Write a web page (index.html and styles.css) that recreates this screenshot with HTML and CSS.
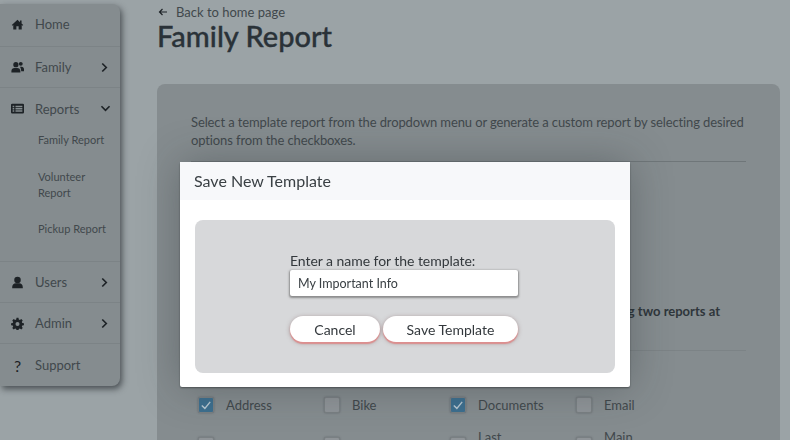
FILE: index.html
```html
<!DOCTYPE html>
<html lang="en">
<head>
<meta charset="utf-8">
<title>Family Report</title>
<link rel="stylesheet" href="styles.css">
</head>
<body>
<div class="page">
  <nav class="sidebar">
    <a class="nav-row nav-row-first"><svg class="nav-icon" viewBox="0 0 16 16"><path d="M8 2.200 1 8.600l.8.9 1-.9V14h3.800v-3.800h2.800V14h3.800V8.600l1 .9.8-.9-2-1.800V3h-2v2.100z"/></svg><span class="nav-label">Home</span></a>
    <a class="nav-row"><svg class="nav-icon" viewBox="0 0 16 16"><circle cx="6" cy="4.500" r="3.200"/><path d="M0.500 14v-1.800C.5 10 2.200 8.500 4.400 8.500h3.200c2.200 0 3.900 1.500 3.900 3.700V14z"/><circle cx="12" cy="3.500" r="2.400"/><path d="M11 7h2c1.800 0 3 1.300 3 3.200V12.500h-3.500c0-2.200-.5-4-1.500-5.500z"/></svg><span class="nav-label">Family</span><svg class="chev" viewBox="0 0 10 12"><path d="M2.500 1.500 7 6l-4.500 4.500"/></svg></a>
    <div class="nav-group">
      <a class="nav-row nav-row-open"><svg class="nav-icon" viewBox="0 0 16 16"><path fill-rule="evenodd" d="M1.500 2h13A1.500 1.500 0 0 1 16 3.500v9a1.500 1.500 0 0 1-1.500 1.500h-13A1.500 1.500 0 0 1 0 12.500v-9A1.500 1.500 0 0 1 1.500 2zM2 4.500v2h2v-2zm3.500 0v2H14v-2zM2 7.500v1.800h2V7.500zm3.500 0v1.800H14V7.500zM2 10.200v1.800h2v-1.800zm3.500 0v1.800H14v-1.800z"/></svg><span class="nav-label">Reports</span><svg class="chev chev-down" viewBox="0 0 12 10"><path d="M1.500 2.500 6 7l4.500-4.500"/></svg></a>
      <a class="nav-sub nav-sub-first">Family Report</a>
      <a class="nav-sub">Volunteer Report</a>
      <a class="nav-sub">Pickup Report</a>
    </div>
    <a class="nav-row"><svg class="nav-icon" viewBox="0 0 16 16"><circle cx="8" cy="5" r="4"/><path d="M1.500 15v-1.500C1.500 11 3.500 9 6 9h4c2.500 0 4.500 2 4.500 4.500V15z"/></svg><span class="nav-label">Users</span><svg class="chev" viewBox="0 0 10 12"><path d="M2.500 1.500 7 6l-4.500 4.500"/></svg></a>
    <a class="nav-row"><svg class="nav-icon" viewBox="0 0 16 16"><path fill-rule="evenodd" d="M6.800 1h2.400l.4 2 1.300.6 1.800-1.100 1.700 1.700-1.100 1.800.6 1.300 2 .4v2.400l-2 .4-.6 1.300 1.100 1.800-1.700 1.700-1.800-1.100-1.300.6-.4 2H6.800l-.4-2-1.300-.6-1.800 1.100-1.700-1.700 1.100-1.800-.6-1.300-2-.4V7.700l2-.4.6-1.300-1.100-1.800 1.700-1.700 1.800 1.100 1.300-.6zM8 6a2.500 2.500 0 1 0 0 5 2.500 2.500 0 0 0 0-5z"/></svg><span class="nav-label">Admin</span><svg class="chev" viewBox="0 0 10 12"><path d="M2.500 1.500 7 6l-4.500 4.500"/></svg></a>
    <a class="nav-row nav-row-last"><span class="nav-icon nav-q">?</span><span class="nav-label">Support</span></a>
  </nav>
  <main class="main">
    <a class="back"><svg class="back-arrow" viewBox="0 0 10 10"><path d="M9 5H1.500M4.500 2 1.500 5l3 3"/></svg>Back to home page</a>
    <h1 class="title">Family Report</h1>
    <section class="card">
      <p class="intro">Select a template report from the dropdown menu or generate a custom report by selecting desired options from the checkboxes.</p>
      <hr class="rule">
      <p class="warning">Please be careful when generating two reports at</p>
      <hr class="rule rule-faint">
      <div class="options">
        <label class="option"><span class="box box-on"><svg viewBox="0 0 10 10"><path d="M2 5.300 4.200 7.400 8 2.800"/></svg></span>Address</label>
        <label class="option"><span class="box"></span>Bike</label>
        <label class="option"><span class="box box-on"><svg viewBox="0 0 10 10"><path d="M2 5.300 4.200 7.400 8 2.800"/></svg></span>Documents</label>
        <label class="option"><span class="box"></span>Email</label>
        <label class="option"><span class="box"></span>First Name</label>
        <label class="option"><span class="box"></span>Gender</label>
        <label class="option"><span class="box"></span>Last<br>Name</label>
        <label class="option"><span class="box"></span>Main<br>Phone</label>
      </div>
    </section>
  </main>
</div>
<div class="backdrop">
  <div class="modal">
    <div class="modal-head">Save New Template</div>
    <div class="modal-body">
      <div class="panel">
        <div class="form">
          <label class="field-label" for="tpl">Enter a name for the template:</label>
          <input class="field" id="tpl" type="text" value="My Important Info">
          <div class="actions">
            <button class="btn btn-cancel">Cancel</button>
            <button class="btn btn-save">Save Template</button>
          </div>
        </div>
      </div>
    </div>
  </div>
</div>
</body>
</html>
```
FILE: styles.css
```css
* { box-sizing: border-box; }
html, body { margin: 0; height: 100%; }
body {
  width: 790px;
  height: 440px;
  overflow: hidden;
  background: #9ba3a6;
  font-family: "Lato", "Liberation Sans", sans-serif;
  color: #3a4146;
}
.page { display: flex; align-items: flex-start; height: 440px; overflow: hidden; }
.sidebar {
  width: 120px;
  flex: none;
  margin-top: 4px;
  background: #858c8f;
  border-radius: 0 8px 8px 0;
  box-shadow: 2px 3px 6px rgba(30, 36, 40, .65);
  display: flex;
  flex-direction: column;
}
.nav-row {
  height: 41px;
  display: flex;
  align-items: center;
  padding: 0 11px 0 11px;
  border-bottom: 1px solid #7c8386;
  font-size: 13px;
  color: #41484c;
}
.nav-row-first { height: 43px; padding-bottom: 2px; }
.nav-row-open { border-bottom: 0; height: 40px; padding-top: 1px; }
.nav-row-last { border-bottom: 0; height: 42px; }
.nav-group { border-bottom: 1px solid #7c8386; height: 174px; }
.nav-icon { width: 13px; height: 13px; fill: #1d2226; flex: none; }
.nav-q { font-size: 16px; color: #1d2226; line-height: 13px; text-align: center; }
.nav-label { margin-left: 11px; flex: 1; }
.chev { width: 9px; height: 11px; fill: none; stroke: #1d2226; stroke-width: 1.800; flex: none; }
.chev-down { width: 11px; height: 9px; margin-right: -2px; }
.nav-sub {
  display: block;
  padding: 0 8px 0 38px;
  margin-bottom: 20px;
  font-size: 11px;
  line-height: 16px;
  color: #41484c;
}
.nav-sub-first { margin-top: 4px; margin-bottom: 21px; }
.main { flex: 1; padding: 0 10px 0 37px; min-width: 0; }
.back { display: flex; align-items: center; height: 16px; margin-top: 4px; font-size: 13px; color: #41484c; }
.back-arrow { width: 10px; height: 10px; margin: 0 8px 0 1px; fill: none; stroke: #1d2226; stroke-width: 1.200; }
.title { margin: 1px 0 0; font-size: 29px; line-height: 30px; font-weight: 500; color: #2a3238; -webkit-text-stroke: .35px #2a3238; }
.card {
  margin-top: 33px;
  height: 400px;
  background: #858c8f;
  border-radius: 8px;
  padding: 29px 34px 0;
}
.intro { margin: 0; font-size: 13px; letter-spacing: -.12px; line-height: 18px; color: #41484c; }
.rule { margin: 12px 0 0; border: 0; border-top: 1px solid #6f7679; }
.rule-faint { margin-top: 30px; border-top-color: #7c8386; }
.warning {
  margin: 140px 0 0;
  height: 18px;
  font-size: 13px;
  line-height: 18px;
  font-weight: 700;
  color: #2f363b;
  text-align: right;
  padding-right: 26px;
  white-space: nowrap;
}
.options {
  display: grid;
  grid-template-columns: repeat(4, 126px);
  grid-auto-rows: 40px;
  margin: 37px 0 0 7px;
}
.option { display: flex; align-items: center; height: 34px; font-size: 13px; line-height: 16px; color: #41484c; }
.box {
  width: 16px;
  height: 16px;
  flex: none;
  margin-right: 12px;
  background: #8f9498;
  border: 1px solid #7a8083;
  border-radius: 2px;
  box-shadow: 0 0 2px rgba(60, 66, 70, .5);
}
.box svg { display: block; width: 14px; height: 14px; fill: none; stroke: #b8c8d2; stroke-width: 1; }
.box-on { background: #3d6f8f; }
.backdrop { position: fixed; inset: 0; padding: 162px 0 0 180px; }
.modal { width: 450px; height: 225px; background: #fff; border-radius: 2px; box-shadow: 0 0 40px rgba(40, 46, 50, .35), 0 1px 2px rgba(0, 0, 0, .4); }
.modal-head { height: 38px; padding-left: 14px; background: #f7f8fa; font-size: 16px; line-height: 38px; color: #3a4044; }
.modal-body { padding: 20px 15px 0; }
.panel { height: 153px; background: #d7d8da; border-radius: 8px; padding-top: 31px; }
.form { width: 228px; margin: 0 auto 0 95px; }
.field-label { display: block; font-size: 14px; letter-spacing: -.05px; line-height: 19px; color: #33383c; }
.field {
  display: block;
  width: 228px;
  height: 26px;
  padding: 0 8px;
  border: 0;
  border-radius: 2px;
  background: #fff;
  box-shadow: 0 1px 2px 1px rgba(90, 90, 90, .6);
  font: inherit;
  font-size: 12.500px;
  color: #3a4044;
}
.actions { display: flex; gap: 3px; margin-top: 20px; }
.btn {
  height: 26px;
  border: 0;
  border-radius: 13px;
  background: #fff;
  font: inherit;
  font-size: 14px;
  color: #33383c;
  box-shadow: 0 2px 1px #dc8f8f, 0 1px 4px rgba(110, 70, 70, .5);
  padding: 0;
}
.btn-cancel { width: 90px; }
.btn-save { width: 135px; }
```
